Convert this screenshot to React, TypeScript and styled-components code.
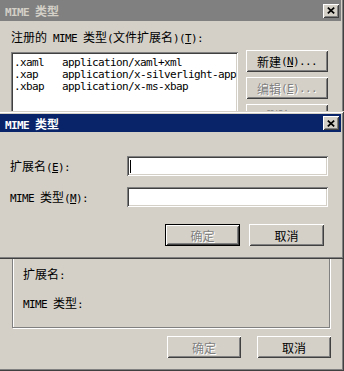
import React from "react";
import styled, { createGlobalStyle } from "styled-components";

const GlobalStyle = createGlobalStyle`
  html, body {
    margin: 0;
    padding: 0;
    background: #d4d0c8;
  }
  body {
    font-family: "Noto Sans CJK SC", sans-serif;
    font-size: 12px;
    color: #000;
  }
`;

const raised = `
  box-shadow: inset 1px 1px #fff, inset -1px -1px #404040,
    inset 2px 2px #d4d0c8, inset -2px -2px #808080;
`;

const sunken = `
  box-shadow: inset 1px 1px #808080, inset -1px -1px #fff,
    inset 2px 2px #404040, inset -2px -2px #d4d0c8;
`;

const Half = styled.span`
  font-family: "DejaVu Sans Mono", "Liberation Mono", monospace;
  font-size: 11px;
  letter-spacing: -0.62px;
`;

const Wide = styled.span`
  font-family: "Noto Sans CJK SC", sans-serif;
  font-size: 12px;
`;

const isWide = (c: string) => /[\u2e80-\u9fff\uff00-\uffef]/.test(c);

// split a label into wide (CJK) and half-width runs, "&X" underlines X
function renderText(s: string): React.ReactNode[] {
  const out: React.ReactNode[] = [];
  let i = 0;
  let key = 0;
  while (i < s.length) {
    const wide = isWide(s[i]);
    let j = i;
    while (j < s.length && isWide(s[j]) === wide) j++;
    const run = s.slice(i, j);
    if (wide) {
      out.push(<Wide key={key++}>{run}</Wide>);
    } else {
      const parts = run.split(/&(.)/);
      out.push(
        <Half key={key++}>
          {parts.map((p, k) => (k % 2 ? <u key={k}>{p}</u> : p))}
        </Half>
      );
    }
    i = j;
  }
  return out;
}

const Desktop = styled.div`
  position: relative;
  width: 344px;
  height: 371px;
  overflow: hidden;
`;

const Window = styled.div`
  box-sizing: border-box;
  display: flex;
  flex-direction: column;
  width: 347px;
  padding: 3px;
  background: #d4d0c8;
  box-shadow: inset 1px 1px #d4d0c8, inset -1px -1px #404040,
    inset 2px 2px #fff, inset -2px -2px #808080;
`;

const BackWindow = styled(Window)`
  height: 374px;
  margin: -3px 0 0 -3px;
`;

const FrontWindow = styled(Window)`
  position: absolute;
  top: 111px;
  left: -3px;
  height: 148px;
`;

const TitleBar = styled.div<{ $active?: boolean; $height: number }>`
  display: flex;
  align-items: center;
  justify-content: space-between;
  height: ${(p) => p.$height}px;
  padding: 0 2px 0 5px;
  background: ${(p) => (p.$active ? "#0a246a" : "#808080")};
  color: ${(p) => (p.$active ? "#fff" : "#d4d0c8")};
  font-weight: bold;
  white-space: pre;
`;

const CloseButton = styled.div`
  display: flex;
  align-items: center;
  justify-content: center;
  width: 16px;
  height: 14px;
  background: #d4d0c8;
  ${raised}
`;

const Body = styled.div<{ $pad: string }>`
  display: flex;
  flex-direction: column;
  flex: 1;
  padding: ${(p) => p.$pad};
`;

const Label = styled.div`
  line-height: 14px;
  height: 14px;
  white-space: pre;
`;

const ListRow = styled.div`
  display: flex;
  gap: 8px;
  margin-top: 8px;
`;

const ListBox = styled.div`
  box-sizing: border-box;
  width: 227px;
  height: 150px;
  padding: 3px 3px;
  background: #fff;
  ${sunken}
`;

const ListItem = styled.div`
  height: 12px;
  line-height: 12px;
  white-space: pre;
`;

const ButtonColumn = styled.div`
  display: flex;
  flex-direction: column;
  gap: 5px;
  margin-top: -2px;
`;

const Button = styled.div<{ $w: number; $disabled?: boolean; $default?: boolean }>`
  box-sizing: border-box;
  display: flex;
  align-items: center;
  justify-content: center;
  width: ${(p) => p.$w}px;
  height: 22px;
  background: #d4d0c8;
  white-space: pre;
  color: ${(p) => (p.$disabled ? "#808080" : "#000")};
  text-shadow: ${(p) => (p.$disabled ? "1px 1px #fff" : "none")};
  border: ${(p) => (p.$default ? "1px solid #000" : "none")};
  ${raised}
`;

const Group = styled.div`
  box-sizing: border-box;
  display: flex;
  flex-direction: column;
  justify-content: flex-end;
  gap: 15px;
  height: 112px;
  margin: 14px 0 0 1px;
  padding: 0 0 17px 10px;
  width: 318px;
  border: 1px solid #808080;
  box-shadow: inset 1px 1px #fff, 1px 1px #fff;
`;

const ButtonRow = styled.div<{ $gap: number; $top: number; $right: number }>`
  display: flex;
  justify-content: flex-end;
  gap: ${(p) => p.$gap}px;
  margin-top: ${(p) => p.$top}px;
  margin-right: ${(p) => p.$right}px;
`;

const FieldRow = styled.div`
  display: flex;
  align-items: center;
  height: 20px;
`;

const FieldLabel = styled(Label)`
  width: 117px;
`;

const Field = styled.div`
  box-sizing: border-box;
  display: flex;
  align-items: center;
  width: 201px;
  height: 20px;
  padding-left: 3px;
  background: #fff;
  ${sunken}
`;

const Caret = styled.div`
  width: 1px;
  height: 13px;
  background: #000;
`;

const Fields = styled.div`
  display: flex;
  flex-direction: column;
  gap: 11px;
`;

function CloseGlyph() {
  return (
    <svg width="8" height="7" viewBox="0 0 8 7">
      <path d="M0.8 0.6 L7.2 6.4 M7.2 0.6 L0.8 6.4" stroke="#000" strokeWidth="1.7" />
    </svg>
  );
}

const items = [
  ".xaml   application/xaml+xml",
  ".xap    application/x-silverlight-app",
  ".xbap   application/x-ms-xbap",
];

export default function App() {
  return (
    <Desktop>
      <GlobalStyle />
      <BackWindow>
        <TitleBar $height={21}>
          <span>{renderText("MIME 类型")}</span>
          <CloseButton>
            <CloseGlyph />
          </CloseButton>
        </TitleBar>
        <Body $pad="9px 10px 0 11px">
          <Label>{renderText("注册的 MIME 类型(文件扩展名)(&T):")}</Label>
          <ListRow>
            <ListBox>
              {items.map((it) => (
                <ListItem key={it}>{renderText(it)}</ListItem>
              ))}
            </ListBox>
            <ButtonColumn>
              <Button $w={82}>{renderText("新建(&N)...")}</Button>
              <Button $w={82} $disabled>
                {renderText("编辑(&E)...")}
              </Button>
              <Button $w={82} $disabled>
                {renderText("删除(&R)")}
              </Button>
            </ButtonColumn>
          </ListRow>
          <Group>
            <Label>{renderText("扩展名:")}</Label>
            <Label>{renderText("MIME 类型:")}</Label>
          </Group>
          <ButtonRow $gap={16} $top={8} $right={0}>
            <Button $w={74} $disabled>
              {renderText("确定")}
            </Button>
            <Button $w={74}>{renderText("取消")}</Button>
          </ButtonRow>
        </Body>
      </BackWindow>

      <FrontWindow>
        <TitleBar $active $height={18}>
          <span>{renderText("MIME 类型")}</span>
          <CloseButton>
            <CloseGlyph />
          </CloseButton>
        </TitleBar>
        <Body $pad="24px 13px 0 10px">
          <Fields>
            <FieldRow>
              <FieldLabel>{renderText("扩展名(&E):")}</FieldLabel>
              <Field>
                <Caret />
              </Field>
            </FieldRow>
            <FieldRow>
              <FieldLabel>{renderText("MIME 类型(&M):")}</FieldLabel>
              <Field />
            </FieldRow>
          </Fields>
          <ButtonRow $gap={9} $top={17} $right={4}>
            <Button $w={75} $disabled $default>
              {renderText("确定")}
            </Button>
            <Button $w={75}>{renderText("取消")}</Button>
          </ButtonRow>
        </Body>
      </FrontWindow>
    </Desktop>
  );
}
